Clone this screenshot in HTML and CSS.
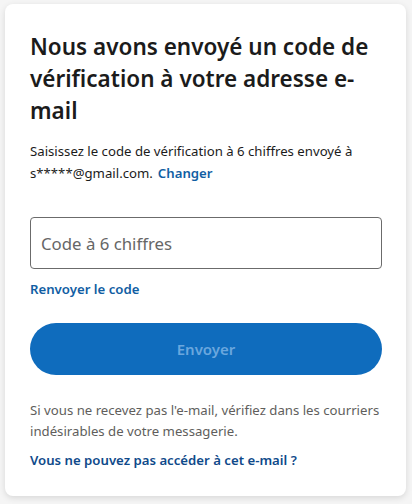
FILE: index.html
```html
<!DOCTYPE html>
<html lang="fr">
<head>
    <meta charset="UTF-8">
    <meta name="viewport" content="width=device-width, initial-scale=1.0">
    <title>Code de vérification</title>
    <link rel="stylesheet" href="styles.css">
</head>
<body>
    <div class="card">
        <h1>Nous avons envoyé un code de vérification à votre adresse e-mail</h1>
        <p class="intro">
            <span>Saisissez le code de vérification à 6 chiffres envoyé à</span>
            <span class="email">s*****@gmail.com.</span><a href="#" class="link">Changer</a>
        </p>

        <input class="code" type="text" placeholder="Code à 6 chiffres">
        <a href="#" class="link resend">Renvoyer le code</a>

        <button class="send" disabled>Envoyer</button>

        <p class="hint">Si vous ne recevez pas l'e-mail, vérifiez dans les courriers indésirables de votre messagerie.</p>
        <a href="#" class="link help">Vous ne pouvez pas accéder à cet e-mail ?</a>
    </div>
</body>
</html>
```

FILE: styles.css
```css
body {
    font-family: "Noto Sans", "Open Sans", Arial, sans-serif;
    margin: 0;
    padding: 4px 6px 9px 5px;
    background-color: #f5f5f5;
    color: #1b1b1b;
}
.card {
    background-color: white;
    border-radius: 8px;
    box-shadow: 0 2px 6px rgba(0,0,0,0.12);
    padding: 27px 24px 26px 25px;
    display: flex;
    flex-direction: column;
}
h1 {
    font-size: 22.5px;
    font-weight: 600;
    line-height: 32px;
    margin: 0;
}
p.intro {
    font-size: 13.2px;
    line-height: 22px;
    margin: 13px 0 0;
}
.link {
    color: #115ea3;
    font-weight: 600;
    text-decoration: none;
}
.intro .email {
    display: inline-block;
}
.intro .link {
    display: inline-block;
    margin-left: 5px;
}
.code {
    margin-top: 33px;
    height: 52px;
    box-sizing: border-box;
    border: 1px solid #6b6b6b;
    border-radius: 4px;
    padding: 0 10px;
    font-family: inherit;
    font-size: 16.8px;
    color: #1b1b1b;
}
.code::placeholder {
    color: #666;
}
.resend {
    font-size: 13.2px;
    line-height: 20px;
    margin-top: 10px;
    align-self: flex-start;
}
.send {
    margin-top: 24px;
    height: 52px;
    border: none;
    border-radius: 26px;
    background-color: #0f6cbd;
    color: #6aa7de;
    font-family: inherit;
    font-size: 15px;
    font-weight: 600;
}
p.hint {
    font-size: 13.2px;
    line-height: 21px;
    color: #605e5c;
    margin: 25px 0 0;
}
.help {
    color: #0f4a8a;
    font-size: 13.2px;
    line-height: 20px;
    margin-top: 8px;
    align-self: flex-start;
}
```
